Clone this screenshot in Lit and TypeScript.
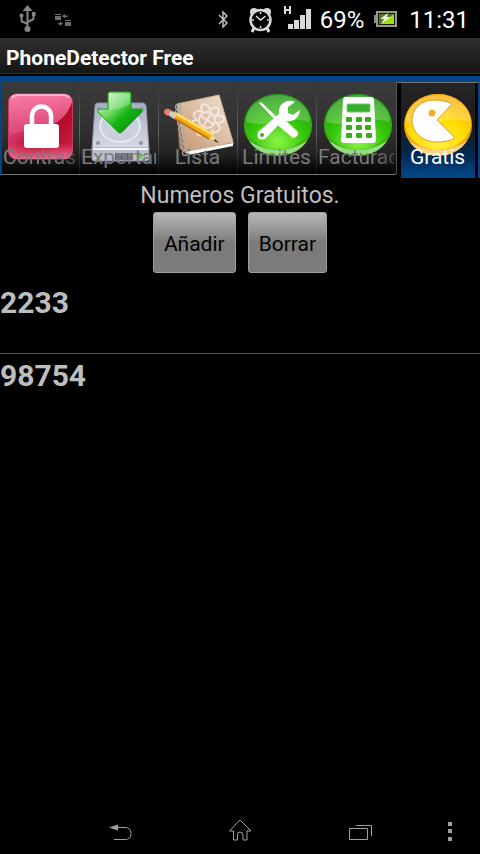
import { LitElement, html, css, svg, nothing, SVGTemplateResult, TemplateResult } from "lit";
import { customElement, property, state } from "lit/decorators.js";
import { classMap } from "lit/directives/class-map.js";

const padlock = svg`
  <defs>
    <linearGradient id="red" x1="0" y1="0" x2="1" y2="1">
      <stop offset="0" stop-color="#e85f8e"/><stop offset=".4" stop-color="#d22f5c"/>
      <stop offset=".6" stop-color="#b30a26"/><stop offset="1" stop-color="#c9234c"/>
    </linearGradient>
    <linearGradient id="gloss" x1="0" y1="0" x2="0" y2="1">
      <stop offset="0" stop-color="#ff86b0"/><stop offset="1" stop-color="#dc4a78"/>
    </linearGradient>
    <linearGradient id="redFoot" x1="0" y1="0" x2="0" y2="1">
      <stop offset=".75" stop-color="#ff7da5" stop-opacity="0"/><stop offset="1" stop-color="#ff8cb2" stop-opacity=".7"/>
    </linearGradient>
  </defs>
  <rect x="7.500" y="12" width="64" height="65" rx="8" fill="url(#red)" stroke="#c43a60"/>
  <path d="M8 53V20q0-8 8-8h47q8 0 8 8Q64 42 38 47Q20 49 8 53z" fill="url(#gloss)" opacity=".8"/>
  <rect x="7.500" y="12" width="64" height="65" rx="8" fill="url(#redFoot)"/>
  <path d="M11 16q2-3 6-3h45q4 0 6 3" fill="none" stroke="#ffc3d6" stroke-width="1.500"/>
  <path d="M31 43V34a9.500 9.500 0 0 1 19 0v9" fill="none" stroke="#fff" stroke-width="4.500"/>
  <rect x="23" y="42" width="35" height="24" rx="3" fill="#fff"/>`;

const drive = svg`
  <defs>
    <linearGradient id="disk" x1="0" y1="0" x2="0" y2="1"><stop offset="0" stop-color="#a4adc2"/><stop offset="1" stop-color="#d9dde7"/></linearGradient>
    <linearGradient id="arrow" x1="0" y1="0" x2="1" y2="1"><stop offset="0" stop-color="#eefcec"/><stop offset=".4" stop-color="#6bd85e"/><stop offset=".58" stop-color="#14b412"/><stop offset="1" stop-color="#078405"/></linearGradient>
  </defs>
  <path d="M19 21h45q2 0 3 3l3 43q0 2-2 2H15q-2 0-2-2l3-43q0-3 3-3z" fill="url(#disk)" stroke="#8e96ac"/>
  <ellipse cx="41" cy="44" rx="20" ry="16" fill="#c9cfdc" stroke="#e6e9f2" stroke-width="2"/>
  <path d="M13 66h57v11q0 2-3 2H16q-3 0-3-2z" fill="#b9becd" stroke="#8b91a8"/>
  <path d="M14 67h55" stroke="#f7f8ff" stroke-width="2"/>
  <path d="M36 71h18v7H36z" fill="#545b6e"/>
  <path d="M38 71v7m3-7v7m3-7v7m3-7v7m3-7v7m3-7v7" stroke="#8f96a8"/>
  <circle cx="61" cy="74" r="2.500" fill="#55d43a"/>
  <g fill="#8c94a8"><circle cx="20" cy="27" r="2"/><circle cx="63" cy="27" r="2"/><circle cx="19" cy="61" r="2"/><circle cx="62" cy="61" r="2"/></g>
  <path d="M29 12q0-2 2-2h19q2 0 2 2v15h9q4 1 1 4L43 50q-2 2-4 0L20 31q-3-3 1-4h8z" fill="url(#arrow)" stroke="#1c9a18"/>
  <path d="M30 12h21v10q-8 5-21 6z" fill="#fff" opacity=".25"/>`;

const notebook = svg`
  <defs><linearGradient id="paper" x1="1" y1="0" x2="0" y2="1"><stop offset="0" stop-color="#f0e4d8"/><stop offset="1" stop-color="#c3946d"/></linearGradient></defs>
  <path d="M19 23L61 13L76 62L28 72L21 66z" fill="#a8764e"/>
  <path d="M19 22L61 13L75 60L28 70z" fill="url(#paper)" stroke="#d2b294"/>
  <path d="M28 70L75 61v3L30 73z" fill="#fff"/>
  <g fill="none" stroke="#a9a9a9" stroke-width="1.200">
    <circle cx="20" cy="25" r="2.500"/><circle cx="20" cy="30" r="2.500"/><circle cx="21" cy="35" r="2.500"/><circle cx="22" cy="41" r="2.500"/><circle cx="23" cy="47" r="2.500"/><circle cx="24" cy="53" r="2.500"/><circle cx="25" cy="59" r="2.500"/><circle cx="26" cy="65" r="2.500"/><circle cx="27" cy="71" r="2.500"/>
  </g>
  <g fill="none" stroke="#fbf5ef" stroke-width="2" opacity=".7" transform="rotate(-12 49 38)">
    <circle cx="49" cy="38" r="8"/>
    <path d="M49 22q4 0 5 7q6-3 8 0t-3 7q7 0 7 4t-8 3q4 6 0 8t-6-1q0 6-4 6t-4-6q-5 3-7 0t2-7q-7 0-7-4t7-3q-4-6 0-8t7 1q-1-7 3-7z"/>
    <path d="M43 32l12 12m0-12L43 44"/>
  </g>
  <path d="M9 29L14 35L51 57L59 60L55 52L17 30L11 28z" fill="#f3ab17"/>
  <path d="M17 31L55 53" stroke="#ffe15c" stroke-width="2.500"/>
  <path d="M14 35L51 57" stroke="#bf6c0d" stroke-width="1.500"/>
  <path d="M51 57L55 52L60 60z" fill="#ecd0a0"/><path d="M57 57l4 4-5-2z" fill="#33231a"/>
  <path d="M12 29L19 32L16 37L10 33z" fill="#c9cbd2"/>
  <path d="M6 29q2-4 7-1l-3 6q-5-2-4-5z" fill="#e9806c"/>`;

const orb = (name: string, light: string, main: string, dark: string, rim: string) => svg`
  <defs>
    <radialGradient id=${name} cx=".5" cy=".85" r=".85"><stop offset="0" stop-color=${light}/><stop offset=".5" stop-color=${main}/><stop offset="1" stop-color=${dark}/></radialGradient>
  </defs>
  <ellipse cx="41" cy="43" rx="34" ry="31" fill=${rim}/>
  <path d="M12 59Q41 77 70 59Q61 73 41 73Q21 73 12 59z" fill="#fff" opacity=".5"/>
  <ellipse cx="41" cy="40" rx="33" ry="28" fill="url(#${name})"/>
  <path d="M9 40A32 27 0 0 1 73 40Q57 35 41 40Q25 44 9 40z" fill="#fff" opacity=".22"/>`;

const tools = svg`
  ${orb("greenA", "#8df545", "#35c50b", "#1c8f14", "#35b70e")}
  <path d="M22 21l2-1 19 18-2 3z" fill="#fff"/>
  <path d="M41 38l4-3 16 15q1 2-1 4t-4 2L38 41z" fill="#fff"/>
  <path d="M21 50L42 32Q41 22 50 19q5-1 8 1l-7 5v6l5 2 7-5q-1 9-9 11-5 1-8-1L29 56q-4 3-8 0-1-3 0-6z" fill="#fff"/>
  <circle cx="25" cy="53" r="2" fill="#35b716"/>`;

const calculator = svg`
  ${orb("greenB", "#8df545", "#35c50b", "#1c8f14", "#35b70e")}
  <path d="M26 18q0-3 3-3h25q3 0 3 3l2 40q0 3-3 3H27q-3 0-3-3z" fill="#fff"/>
  <rect x="30" y="22" width="23" height="8" rx="1" fill="#35ae30" stroke="#77c96f"/>
  <g fill="#35ad16">
    <rect x="29" y="35" width="6" height="5" rx="1"/><rect x="39" y="35" width="6" height="5" rx="1"/><rect x="48" y="35" width="6" height="5" rx="1"/>
    <rect x="29" y="43" width="6" height="5" rx="1"/><rect x="39" y="43" width="6" height="5" rx="1"/><rect x="48" y="43" width="6" height="5" rx="1"/>
    <rect x="29" y="51" width="6" height="5" rx="1"/><rect x="39" y="51" width="6" height="5" rx="1"/><rect x="49" y="51" width="6" height="5" rx="1"/>
  </g>`;

const muncher = svg`
  <g transform="translate(-1 -1)">
    ${orb("gold", "#fff04a", "#ffdc00", "#f8a712", "#f6a70b")}
    <path d="M55 22C50 19 43 18 37 18C24 18 15 27 15 38C15 51 26 60 40 60C47 60 53 59 58 56L40 38z" fill="#fff" stroke="#e79a10"/>
    <circle cx="35" cy="31" r="3.500" fill="#eeb02c"/>
  </g>`;

interface TabItem { label: string; art: SVGTemplateResult; start?: boolean; fade?: boolean; }

const TABS: TabItem[] = [
  { label: "Contras", art: padlock, start: true, fade: true },
  { label: "Exportar", art: drive, start: true },
  { label: "Lista", art: notebook },
  { label: "Limites", art: tools },
  { label: "Facturac", art: calculator, start: true, fade: true },
  { label: "Gratis", art: muncher },
];

@customElement("status-bar")
export class StatusBar extends LitElement {
  static styles = css`
    :host { display: flex; align-items: center; height: 38px; padding: 0 11px 0 19px; color: #fff; font-size: 24px; }
    svg { display: block; flex: none; height: 38px; }
    .left { display: flex; gap: 19px; }
    .right { display: flex; align-items: center; margin-left: auto; gap: 10px; }
    .group { display: flex; align-items: center; gap: 8px; }
    .bt { margin-right: 10px; }
    .time { margin-left: 1px; }
    .text { padding-top: 2px; }
  `;
  render() {
    return html`
      <div class="left">
        <svg width="17" viewBox="19 0 17 38" aria-label="USB">
          <g fill="none" stroke="#868686" stroke-width="2"><path d="M27.500 9v20M21.500 15v5q0 2 2 2l4 2M33.500 14v4q0 2-2 2l-4 2"/></g>
          <g fill="#868686"><path d="M27.500 5l5 6h-10z"/><circle cx="27.500" cy="29" r="3"/><circle cx="21.500" cy="15.500" r="2"/><path d="M32 12h3.500v4H32z"/></g>
        </svg>
        <svg width="17" viewBox="55 0 17 38" aria-label="Sync">
          <g fill="#6d6d6d"><path d="M55 14h6v1h-6zM55 16h6v4h-6zM65 20h6v1h-6zM65 22h6v4h-6zM62 16l3-2v1.500h3v1.500h-3v1.500zM63 23.500l-3-2v1.500h-2v1.500h2V26z"/></g>
        </svg>
      </div>
      <div class="right">
        <svg class="bt" width="11" viewBox="218 0 11 38" aria-label="Bluetooth"><path d="M219 15l8 8-4 4V12l4 4-8 8" fill="none" stroke="#c8c8c8" stroke-width="1.400"/></svg>
        <svg width="24" viewBox="249 0 24 38" aria-label="Alarm">
          <circle cx="254" cy="12" r="4" fill="#d8d8d8"/><circle cx="267" cy="12" r="4" fill="#d8d8d8"/>
          <path d="M254 28l-2 4M267 28l2 4" stroke="#d8d8d8" stroke-width="3"/>
          <circle cx="260.500" cy="20" r="10" fill="#000" stroke="#d8d8d8" stroke-width="2.500"/>
          <path d="M256 16l4.500 4 5-4M260.500 12v2M260.500 26v2M252 20h2M267 20h2" fill="none" stroke="#e2e2e2" stroke-width="1.500"/>
        </svg>
        <div class="group">
          <svg width="29" viewBox="283 0 29 38" aria-label="Signal">
            <path d="M285 6v8M290 6v8M285 10h5" stroke="#ddd" stroke-width="2" fill="none"/>
            <path d="M288 24h5v5h-5zM294 20h5v9h-5zM300 15h5v14h-5zM306 9h5v20h-5z" fill="#d9d9d9"/>
          </svg>
          <span class="text">69%</span>
        </div>
        <svg width="24" viewBox="374 0 24 38" aria-label="Battery charging">
          <path d="M374 15h3v8h-3z" fill="#8b8c86"/><path d="M377 12h19v14h-19z" fill="#171d0d" stroke="#96978f" stroke-width="2"/>
          <path d="M379 14h15v10h-15z" fill="#567326"/><path d="M394 14v10h-13z" fill="#9be113"/>
          <path d="M388 13l-8 6h4l-3 5 10-7h-4z" fill="#e9f4d7"/>
        </svg>
        <span class="time text">11:31</span>
      </div>`;
  }
}

@customElement("icon-tabs")
export class IconTabs extends LitElement {
  @state() private selected = 5;
  static styles = css`
    :host { display: block; }
    .strip { display: grid; grid-template-columns: 79fr 79fr 79fr 79fr 81fr 83fr; align-items: start; padding-top: 6px; background: linear-gradient(#024486 98px, #000 98px); }
    .tab {
      appearance: none; border: 0; border-bottom: 1px solid #777; margin: 0; padding: 0; font: inherit; font-size: 21px; line-height: 24px; color: #7b7b7b;
      min-width: 0; height: 93px; box-sizing: border-box; display: grid; grid-template-columns: 100%; justify-items: center; overflow: hidden;
      background: linear-gradient(#3b3b3b, #303030 50px, #222 72px, #000 92px);
    }
    .tab::before { content: ""; grid-area: 1 / 1; justify-self: start; width: 1px; height: 92px; background: linear-gradient(#333, #666 50px, #111); }
    .tab.first { border-left: 2px solid #024486; }
    .tab.first::before, .tab.on::before { display: none; }
    .tab.last { border-right: 1px solid #555; border-bottom-right-radius: 3px; }
    .art { grid-area: 1 / 1; display: block; width: 79px; height: 92px; }
    .name { grid-area: 1 / 1; align-self: end; margin-bottom: 5px; z-index: 1; white-space: nowrap; overflow: hidden; max-width: 100%; }
    .name.start { justify-self: stretch; margin-left: 2px; margin-right: 2px; text-align: left; }
    .name.fade { -webkit-mask-image: linear-gradient(90deg, #000 75%, #0006); mask-image: linear-gradient(90deg, #000 75%, #0006); }
    .tab.first .name { margin-left: 1px; }
    .tab.on {
      height: 96px; color: #fff; border: 0; border-top: 1px solid #777; border-right: 2px solid #024486; align-items: start;
      background: linear-gradient(90deg, #000 4px, transparent 4px, transparent calc(100% - 3px), #000 calc(100% - 3px)), linear-gradient(#252525, #1b1b1b 40px, #03284e 70px, #024486 92px);
    }
    .tab.on .name { margin-bottom: 9px; }
  `;
  render() {
    return html`<div class="strip" role="tablist">${TABS.map((t, i) => html`
      <button role="tab" aria-selected=${i === this.selected ? "true" : "false"}
        class=${classMap({ tab: true, on: i === this.selected, first: i === 0, last: i === TABS.length - 2 })}
        @click=${() => { this.selected = i; }}>
        <svg class="art" viewBox="0 0 79 92" aria-hidden="true">${t.art}</svg>
        <span class=${classMap({ name: true, start: !!t.start, fade: !!t.fade })}>${t.label}</span>
      </button>`)}</div>`;
  }
}

@customElement("nav-bar")
export class NavBar extends LitElement {
  static styles = css`
    :host { display: flex; height: 48px; }
    button { appearance: none; border: 0; padding: 0; margin: 0; background: none; flex: 2 1 0; display: flex; align-items: center; justify-content: center; }
    .lead { flex: 1 1 0; }
    .more { flex: 1 1 0; }
    svg { display: block; fill: none; stroke: #a0a0a0; }
  `;
  private key(label: string, art: SVGTemplateResult, cls = ""): TemplateResult {
    return html`<button class=${cls || nothing} aria-label=${label}><svg width="30" height="48" viewBox="0 0 30 48">${art}</svg></button>`;
  }
  render() {
    return html`
      <span class="lead"></span>
      ${this.key("Back", svg`<path d="M9 33.500h11q6 0 6-6t-6-6H12"/><path d="M4 21.500l9-3v6z" fill="#a0a0a0" stroke="none"/>`)}
      ${this.key("Home", svg`<path d="M15 14l11 11h-4v9h-4v-5q0-3-3-3t-2.500 3v5h-4v-9H4.500z"/>`)}
      ${this.key("Recent", svg`<path d="M4.500 22.500h18v11h-18zM11 19.500h15.500V30"/>`)}
      ${this.key("Menu", svg`<path d="M13 16h4v4h-4zM13 23h4v4h-4zM13 31h4v4h-4z" fill="#a0a0a0" stroke="none"/>`, "more")}`;
  }
}

@customElement("app-root")
export class AppRoot extends LitElement {
  @property({ type: Array }) numbers = ["2233", "98754"];
  static styles = css`
    :host { display: flex; flex-direction: column; min-height: 100vh; background: #000; color: #bebebe; font-family: Roboto, "Noto Sans", sans-serif; }
    .title { margin: 0; height: 38px; box-sizing: border-box; padding: 0 6px; font-size: 21px; line-height: 40px; font-weight: 700; color: #fff;
      background: linear-gradient(#303030, #151515 35px, #333 35px, #333 36px, #000 36px); }
    .main { flex: 1; }
    .heading { margin: 0; padding: 3px 0 1px; text-align: center; font-size: 23px; line-height: 30px; font-weight: 400; }
    .actions { display: flex; justify-content: center; gap: 12px; }
    .action { appearance: none; margin: 0; height: 61px; padding: 2px 10px 0; border: 1px solid #a0a0a0; border-radius: 3px;
      background: linear-gradient(#b8b8b8, #7b7b7b 50%, #7b7b7b); font: inherit; font-size: 21px; color: #000; }
    .numbers { list-style: none; margin: 8px 0 0; padding: 0; font-size: 30px; line-height: 44px; font-weight: 700; }
    .number { min-height: 72px; box-sizing: border-box; }
    .number + .number { border-top: 1px solid #555; }
  `;
  render() {
    return html`
      <status-bar></status-bar>
      <h1 class="title">PhoneDetector Free</h1>
      <icon-tabs></icon-tabs>
      <main class="main">
        <h2 class="heading">Numeros Gratuitos.</h2>
        <div class="actions">
          <button class="action">Añadir</button>
          <button class="action">Borrar</button>
        </div>
        <ul class="numbers">${this.numbers.map((n) => html`<li class="number">${n}</li>`)}</ul>
      </main>
      <nav-bar></nav-bar>`;
  }
}
